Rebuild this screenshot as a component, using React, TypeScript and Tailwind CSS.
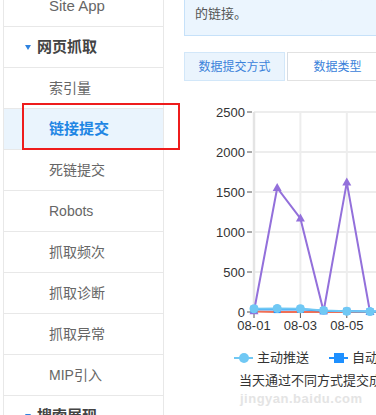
import React from "react";

const font = { fontFamily: '"Liberation Sans", "Noto Sans CJK SC", sans-serif' };

const items = ["索引量", "链接提交", "死链提交", "Robots", "抓取频次", "抓取诊断", "抓取异常", "MIP引入"];

function Row({ label, active }: { label: string; active?: boolean }) {
  return (
    <div
      className={`h-[41px] shrink-0 border-b border-[#e8e8e8] flex items-center pl-[45px] ${
        active ? "bg-[#eaf4fd] text-[#1f86e4] font-bold text-[15px]" : "text-[#666] text-[14px]"
      }`}
    >
      {label}
    </div>
  );
}

function Header({ label }: { label: string }) {
  return (
    <div className="h-[41px] shrink-0 border-b border-[#e8e8e8] flex items-center pl-[21px] gap-[6px] text-[15px] font-bold text-[#444]">
      <span className="w-0 h-0 border-l-[3.5px] border-r-[3.5px] border-t-[5px] border-l-transparent border-r-transparent border-t-[#2f83e0]" />
      {label}
    </div>
  );
}

const X = (i: number) => 70 + i * 23.2;
const Y = (v: number) => 217 - v * 0.08;
const pts = (vals: number[]) => vals.map((v, i) => `${X(i)},${Y(v)}`).join(" ");

const purple = [10, 1550, 1170, 10, 1620, 0];
const light = [40, 45, 40, 20, 10, 5, 5];
const blue = [35, 30, 35, 15, 10, 5, 5];
const red = [5, 0, 0, 0, 0, 0, 0];

function Chart() {
  return (
    <svg width="192" height="250" className="block">
      {[0, 500, 1000, 1500, 2000, 2500].map((v) => (
        <g key={v}>
          {v > 0 && <line x1={70} x2={192} y1={Y(v)} y2={Y(v)} stroke="#ededed" strokeWidth={2} />}
          <line x1={63} x2={68} y1={Y(v)} y2={Y(v)} stroke="#555" strokeWidth={1} />
          <text x={61} y={Y(v) + 4.5} textAnchor="end" fontSize="13" fill="#333" style={font}>
            {v}
          </text>
        </g>
      ))}
      {[2, 4, 6].map((i) => (
        <line key={i} x1={X(i)} x2={X(i)} y1={17} y2={217} stroke="#ededed" strokeWidth={2} />
      ))}
      <line x1={70} x2={70} y1={17} y2={217} stroke="#e4e4e4" strokeWidth={2.5} />
      {[0, 2, 4].map((i) => (
        <g key={i}>
          <line x1={X(i)} x2={X(i)} y1={218} y2={223} stroke="#555" strokeWidth={1} />
          <text x={X(i)} y={235} textAnchor="middle" fontSize="13" fill="#333" style={font}>
            08-0{i + 1}
          </text>
        </g>
      ))}
      <polyline points={pts(purple)} fill="none" stroke="#9370db" strokeWidth={2} />
      {purple.map((v, i) => (
        <polygon
          key={i}
          points={`${X(i)},${Y(v) - 5} ${X(i) - 4.5},${Y(v) + 3} ${X(i) + 4.5},${Y(v) + 3}`}
          fill="#9370db"
        />
      ))}
      <polyline points={pts(red)} fill="none" stroke="#f06f55" strokeWidth={2} />
      <polyline points={pts(blue)} fill="none" stroke="#1e90ff" strokeWidth={2} />
      {blue.map((v, i) => (
        <rect key={i} x={X(i) - 3.5} y={Y(v) - 3.5} width={7} height={7} fill="#1e90ff" />
      ))}
      <polyline points={pts(light)} fill="none" stroke="#70c8f4" strokeWidth={2} />
      {light.map((v, i) => (
        <circle key={i} cx={X(i)} cy={Y(v)} r={4.5} fill="#70c8f4" />
      ))}
    </svg>
  );
}

export default function App() {
  return (
    <div className="relative w-[376px] h-[415px] overflow-hidden bg-white flex items-start" style={font}>
      <div className="ml-[3px] w-[161px] shrink-0 -mt-[14px] border-l border-r border-[#e8e8e8] flex flex-col">
        <div className="h-[41px] shrink-0 border-b border-[#e8e8e8] flex items-center pl-[45px] text-[15px] text-[#666]">
          Site App
        </div>
        <Header label="网页抓取" />
        {items.map((t) => (
          <Row key={t} label={t} active={t === "链接提交"} />
        ))}
        <Header label="搜索展现" />
      </div>

      <div className="ml-[20px] flex flex-col shrink-0 w-[220px]">
        <div className="-mt-[25px] w-[260px] border border-[#c6e1f9] bg-[#ebf5fe] pt-[8px] pb-[11px] pl-[10px] text-[13px] leading-[20px] text-[#555]">
          <div className="flex items-center gap-[4px] whitespace-nowrap">
            <span className="w-[12px] h-[12px] rounded-full border-[1.5px] border-[#f5a623] text-[#f5a623] text-[8px] leading-none flex items-center justify-center">
              !
            </span>
            下图为不同方式提交成功的数量，以及通过主动推送提交
          </div>
          <div className="whitespace-nowrap">的链接。</div>
        </div>

        <div className="mt-[16px] flex h-[29px] text-[12px] whitespace-nowrap">
          <div className="w-[101px] shrink-0 bg-[#eaf4fd] border border-[#d2e7f9] text-[#3a82da] flex items-center justify-center">
            数据提交方式
          </div>
          <div className="w-[101px] shrink-0 ml-[2px] border border-[#e2e2e2] border-l-[#d6dde5] text-[#3a82da] flex items-center justify-center">
            数据类型
          </div>
        </div>

        <div className="mt-[14px]">
          <Chart />
        </div>

        <div className="mt-[3px] h-[20px] flex items-center text-[13px] text-[#333] whitespace-nowrap">
          <span className="relative ml-[50px] w-[20px] h-[2px] border-t-2 border-dashed border-[#70c8f4]">
            <span className="absolute left-[5px] -top-[6px] w-[10px] h-[10px] rounded-full bg-[#70c8f4]" />
          </span>
          <span className="ml-[4px]">主动推送</span>
          <span className="relative ml-[20px] w-[20px] h-[2px] border-t-2 border-dashed border-[#1e90ff]">
            <span className="absolute left-[5px] -top-[6px] w-[10px] h-[10px] bg-[#1e90ff]" />
          </span>
          <span className="ml-[4px]">自动推送</span>
        </div>

        <div className="mt-[3px] h-[20px] pl-[55px] flex items-center text-[13px] text-[#333] whitespace-nowrap">
          当天通过不同方式提交成功的链接数量
        </div>
      </div>

      <div className="absolute left-[22px] top-[103px] w-[158px] h-[47px] border-2 border-[#ee1c1c]" />
      <div className="absolute left-[240px] top-[389px] text-[13px] font-bold text-[#e4e4e4] tracking-[0.5px]">
        jingyan.baidu.com
      </div>
    </div>
  );
}
